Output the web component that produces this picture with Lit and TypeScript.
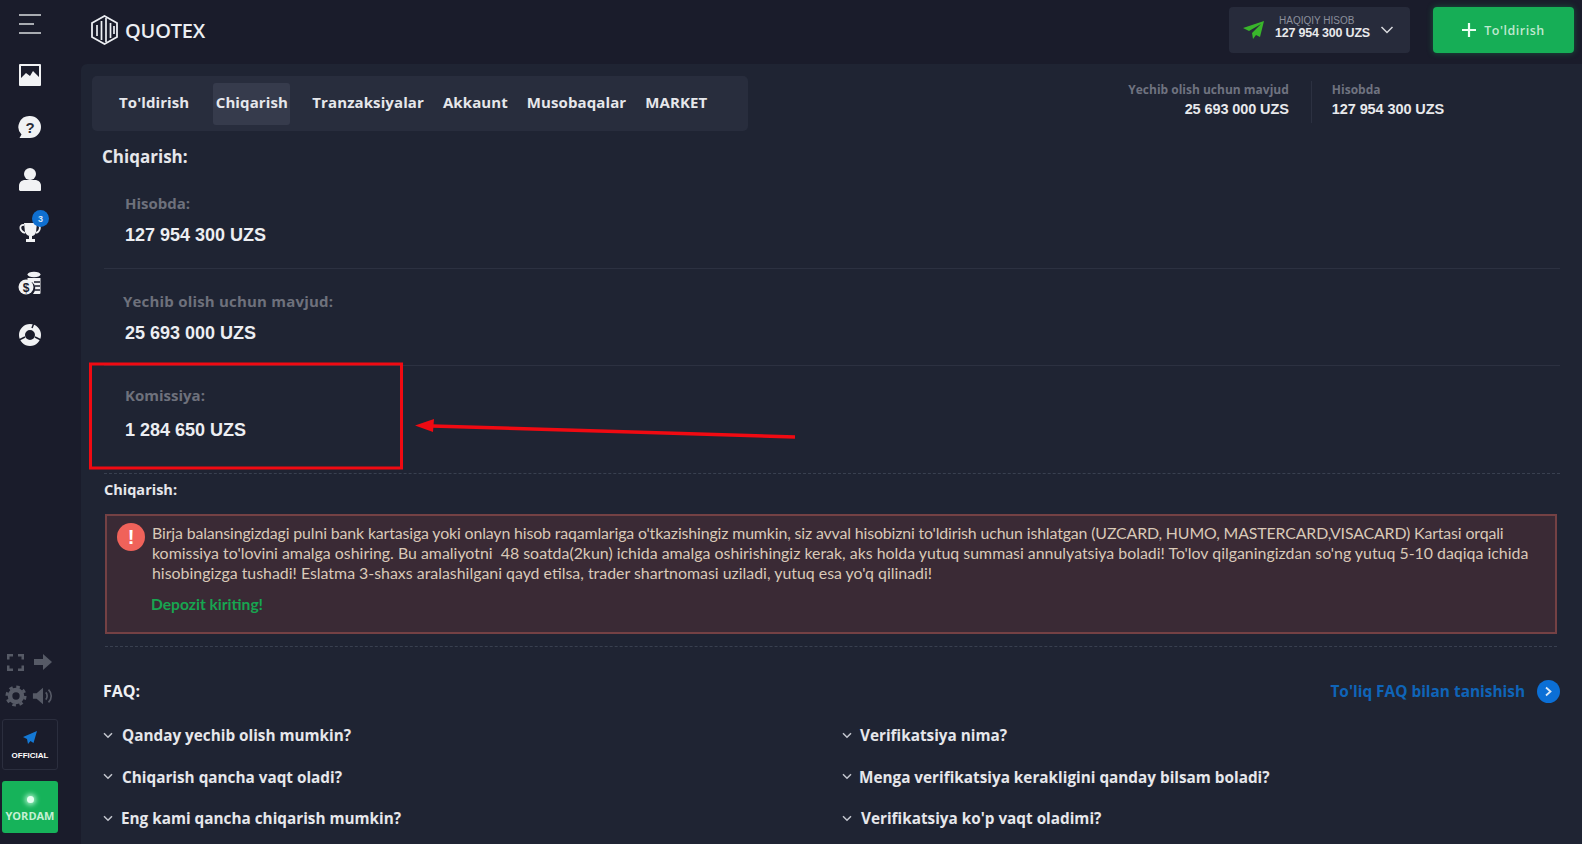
import { LitElement, html, css, svg } from "lit";
import { customElement } from "lit/decorators.js";

const chevron = html`<svg class="chev" viewBox="0 0 10 7"><path d="M1 1.2 5 5.2 9 1.2" fill="none" stroke="#c4c7cf" stroke-width="1.5"/></svg>`;

@customElement("app-root")
export class AppRoot extends LitElement {
  static styles = css`
    :host { display: block; width: 1582px; height: 844px; overflow: hidden; position: relative; background: #1a1c2b; color: #fff; font-family: "Open Sans", "Noto Sans", sans-serif; }
    * { box-sizing: border-box; }
    .app { display: grid; grid-template-columns: 81px 1fr; height: 844px; }
    .side { display: flex; flex-direction: column; align-items: flex-start; padding: 12px 0 11px 2px; }
    .burger { width: 56px; height: 24px; display: flex; justify-content: center; margin-bottom: 13px; }
    .ic { width: 56px; height: 52px; display: flex; align-items: center; justify-content: center; position: relative; }
    .ic svg { width: 24px; height: 24px; }
    .badge { position: absolute; left: 30px; top: 5px; width: 17px; height: 17px; border-radius: 50%; background: #0f6fd0; color: #d9e7f7; font: 700 9px "Liberation Sans", sans-serif; display: flex; align-items: center; justify-content: center; }
    .tools { margin-top: auto; display: grid; grid-template-columns: 27px 27px; gap: 12px 0; width: 54px; justify-items: center; align-items: center; margin-bottom: 12px; }
    .tools svg { width: 22px; height: 22px; }
    .tools svg.fs { width: 19px; height: 19px; }
    .official { width: 56px; height: 51px; border: 1px solid #2b2e3e; border-radius: 3px; display: flex; flex-direction: column; align-items: center; justify-content: center; gap: 5px; font: 700 8px "Liberation Sans", sans-serif; margin-bottom: 11px; }
    .official svg { width: 16px; height: 16px; }
    .help { width: 56px; height: 52px; background: #16b35a; border-radius: 3px; display: flex; flex-direction: column; align-items: center; justify-content: center; gap: 5px; font: 700 11px "Open Sans", sans-serif; color: #c4f0d4; padding-top: 4px; }
    .dot { width: 7px; height: 7px; border-radius: 50%; background: #e4fff0; box-shadow: 0 0 5px 2px #a8f0c8; }

    .right { display: flex; flex-direction: column; min-width: 0; }
    .top { height: 64px; display: flex; align-items: center; padding: 0 8px 4px 10px; }
    .logo { display: flex; align-items: center; gap: 7px; font: 600 20px "Open Sans", sans-serif; color: #eceef2; letter-spacing: -0.2px; }
    .logo svg { width: 27px; height: 30px; }
    .acct { margin-left: auto; width: 181px; height: 46px; background: #272b3b; border-radius: 4px; display: flex; align-items: center; padding-left: 14px; margin-right: 23px; }
    .acct .plane { width: 21px; height: 18px; margin-right: 11px; }
    .acct .txt { margin-top: -4px; }
    .acct .lbl { font: 400 10px "Liberation Sans", sans-serif; color: #8b8f9c; padding-left: 4px; line-height: 11px; }
    .acct .val { font: 700 12.5px "Liberation Sans", sans-serif; color: #e8e9ec; line-height: 15px; letter-spacing: -0.2px; }
    .acct .chev { width: 14px; height: 10px; margin-left: 10px; }
    .dep { width: 141px; height: 46px; background: #16ae56; border-radius: 4px; display: flex; align-items: center; justify-content: center; gap: 8px; font: 600 12.5px "Open Sans", sans-serif; letter-spacing: 0.5px; color: #bfe8cf; box-shadow: 0 0 6px rgba(22,174,86,.4); }
    .dep svg { width: 14px; height: 14px; }

    .main { flex: 1; background: #1f2433; padding: 12px 22px 0 11px; border-top-left-radius: 6px; min-height: 0; }
    .headrow { display: flex; align-items: flex-start; }
    .tabs { width: 656px; height: 55px; background: #282d3d; border-radius: 5px; display: flex; align-items: center; gap: 19px; padding-left: 27px; font: 700 15px "Open Sans", sans-serif; letter-spacing: 0.1px; color: #e6e7eb; }
    .tab { height: 42px; display: flex; align-items: center; border-radius: 3px; white-space: nowrap; padding-bottom: 3px; }
    .tab.on { background: #363b4c; margin: 0 3px 0 5px; width: 77px; justify-content: center; }
    .stats { margin-left: auto; margin-right: 116px; display: flex; margin-top: 5px; }
    .stat { font: 700 12px "Open Sans", sans-serif; color: #6f7380; line-height: 18px; }
    .stat b { display: block; font: 700 14.5px "Liberation Sans", sans-serif; color: #e8e9ec; line-height: 20px; letter-spacing: -0.1px; }
    .stat.a { text-align: right; padding-right: 22px; border-right: 1px solid #2c3141; height: 42px; }
    .stat.b { padding-left: 20px; }

    h2 { margin: 15px 0 0 10px; font: 700 17px/22px "Open Sans", sans-serif; color: #e6e7eb; }
    .block { margin-left: 12px; padding-left: 21px; height: 97px; border-bottom: 1px solid #2c3141; padding-top: 22px; }
    .block.first { height: 101px; padding-top: 25px; }
    .block.plain { height: 108px; border-bottom: 1px dashed #394050; padding-top: 19px; }
    .lbl2 { font: 700 15px/20px "Open Sans", sans-serif; color: #6e717c; }
    .lbl2.wide { letter-spacing: 0.2px; margin-left: -2px; }
    .val2 { font: 700 18px/22px "Liberation Sans", sans-serif; color: #eceef2; margin-top: 11px; }
    .plain .val2 { margin-top: 14px; }
    h3 { margin: 5px 0 0 12px; font: 700 14.5px/22px "Open Sans", sans-serif; color: #e6e7eb; }
    .alert { margin: 13px 0 0 13px; width: 1452px; height: 120px; background: #3a2a35; border: 2px solid #744144; display: flex; padding: 7px 10px; gap: 7px; }
    .alert .mark { width: 28px; height: 28px; border-radius: 50%; background: #f0625a; color: #fff; font: 700 20px "Liberation Sans", sans-serif; display: flex; align-items: center; justify-content: center; flex: none; }
    .alert p { margin: 0; font: 400 15.9px/20px "Lato", sans-serif; color: #d9c9b8; white-space: nowrap; }
    .alert .l1 { letter-spacing: -0.14px; }
    .alert .go { display: block; font: 700 15.6px/20px "Lato", sans-serif; color: #17a550; margin-top: 11px; margin-left: -1px; }
    .dash { margin: 12px 0 0 13px; width: 1452px; border-top: 1px dashed #394050; }
    .faqhead { display: flex; align-items: center; justify-content: space-between; margin: 32px 0 0 11px; width: 1457px; height: 24px; }
    .faqhead h4 { margin: 0; font: 700 16px/22px "Open Sans", sans-serif; color: #eef0f3; }
    .more { display: flex; align-items: center; gap: 12px; font: 700 15.4px "Open Sans", sans-serif; color: #0f64b8; }
    .more i { width: 23px; height: 23px; border-radius: 50%; background: #0b6fd6; display: flex; align-items: center; justify-content: center; }
    .more svg { width: 9px; height: 11px; }
    .faq { display: grid; grid-template-columns: 739px 1fr; margin: 21px 0 0 11px; row-gap: 19.5px; }
    .q { display: flex; align-items: center; gap: 9px; font: 700 15.3px/22px "Open Sans", sans-serif; color: #e6e7eb; white-space: nowrap; }
    .q.tight { gap: 8px; }
    .q.tighter { gap: 7px; }
    .chev { width: 10px; height: 7px; flex: none; }

    .overlay { position: absolute; left: 0; top: 0; width: 1582px; height: 844px; pointer-events: none; }
  `;

  render() {
    const W = "#f1f2f4";
    return html`
      <div class="app">
        <aside class="side">
          <div class="burger"><svg width="24" height="24" viewBox="0 0 24 24"><path d="M1 3h22M1 12h15M1 21h22" stroke="#d8dade" stroke-width="1.6"/></svg></div>
          <div class="ic"><svg viewBox="0 0 24 24"><path fill-rule="evenodd" fill="${W}" d="M2 1h20a1 1 0 0 1 1 1v20a1 1 0 0 1-1 1H2a1 1 0 0 1-1-1V2a1 1 0 0 1 1-1Zm1 14 5-5 4 3 3-5 6 6V3H3Z"/></svg></div>
          <div class="ic"><svg viewBox="0 0 24 24"><path fill="${W}" d="M12 1a11 11 0 0 1 0 22H1.500l2-3.400A11 11 0 0 1 12 1Z"/><text x="12" y="17.500" text-anchor="middle" font-family="Liberation Sans" font-weight="700" font-size="15" fill="#2a2c38">?</text></svg></div>
          <div class="ic"><svg viewBox="0 0 24 24"><circle cx="12" cy="7" r="6" fill="${W}"/><path fill="${W}" d="M1 23v-4c0-4 3-6 6-6h10c3 0 6 2 6 6v4a1 1 0 0 1-1 1H2Z"/></svg></div>
          <div class="ic"><svg viewBox="0 0 24 24"><path fill="${W}" d="M6 4h13l-1 9c-.5 2.500-2.500 4-4 4h-2c-2 0-4-1.500-5-4Z"/><path d="M6 6C1 5 1 12 7 14M19 6c4-1 4 6-1 8" fill="none" stroke="${W}" stroke-width="1.800"/><path fill="${W}" d="M11 17h3v3h3v3H8v-3h3Z"/></svg><span class="badge">3</span></div>
          <div class="ic"><svg viewBox="0 0 24 24"><ellipse cx="16" cy="3.500" rx="6.500" ry="2.800" fill="${W}"/><path fill="${W}" d="M9.500 7h13v15a1 1 0 0 1-1 1H15a8 8 0 0 0-1-12H9.500Z"/><path d="M16 11h6M17 15h5M17 19h5" stroke="#1a1c2b" stroke-width="1.300"/><circle cx="8" cy="16" r="7.500" fill="${W}"/><text x="8" y="20.500" text-anchor="middle" font-family="Liberation Sans" font-weight="700" font-size="12" fill="#1a1c2b">$</text></svg></div>
          <div class="ic"><svg viewBox="0 0 24 24"><circle cx="12" cy="12" r="8" fill="none" stroke="${W}" stroke-width="6"/><path d="M14 5 16 0M7 14 1 17M17 14 23 17" stroke="#1a1c2b" stroke-width="1.500"/></svg></div>

          <div class="tools">
            <svg class="fs" viewBox="0 0 19 19" fill="#565a66"><path d="M1 1h6v2.500H3.500V6.500H1ZM12 1h6v5.500h-2.500v-3H12ZM1 12.500h2.500v3H7V18H1ZM15.500 12.500H18V18h-6v-2.500h3.500Z"/></svg>
            <svg viewBox="0 0 22 22" fill="#565a66"><path d="M2 8h9V3l9 8-9 8v-5H2Z"/></svg>
            <svg viewBox="0 0 24 24"><circle cx="12" cy="12" r="6.500" fill="none" stroke="#565a66" stroke-width="5"/><circle cx="12" cy="12" r="10" fill="none" stroke="#565a66" stroke-width="3" stroke-dasharray="3.900 3.954"/></svg>
            <svg viewBox="0 0 24 22"><path fill="#565a66" d="M1 8h4l7-6v18l-7-6H1Z"/><path d="M15 7c2 2 2 6 0 8M18 4c4 4 4 10 0 14" fill="none" stroke="#565a66" stroke-width="1.800"/></svg>
          </div>
          <div class="official"><svg viewBox="0 0 16 16"><path fill="#1478d4" d="M15 1 1 7l4 2 1 5 2.500-3 3 2Z"/></svg>OFFICIAL</div>
          <div class="help"><span class="dot"></span>YORDAM</div>
        </aside>

        <div class="right">
          <header class="top">
            <div class="logo">
              <svg viewBox="0 0 27 30"><path d="M13.500 1 26 8v14l-12.500 7L1 22V8Z" fill="none" stroke="#eceef2" stroke-width="1.800"/><path d="M6 10v11M10.500 6v19M15 3v24M19.500 8v15M23 11v8" stroke="#eceef2" stroke-width="1.700" fill="none"/></svg>
              QUOTEX
            </div>
            <div class="acct">
              <svg class="plane" viewBox="0 0 21 18"><path fill="#39b52b" d="M21 0 0 7l6 3 12-7-9 9 1 6 3-4 4 2Z"/></svg>
              <div class="txt"><div class="lbl">HAQIQIY HISOB</div><div class="val">127 954 300 UZS</div></div>
              <svg class="chev" viewBox="0 0 14 10"><path d="M1.500 2 7 7.500 12.500 2" fill="none" stroke="#d8dade" stroke-width="1.500"/></svg>
            </div>
            <div class="dep"><svg viewBox="0 0 14 14"><path d="M7 0v14M0 7h14" stroke="#eafff2" stroke-width="2.200"/></svg>To'ldirish</div>
          </header>

          <main class="main">
            <div class="headrow">
              <nav class="tabs">
                <span class="tab">To'ldirish</span>
                <span class="tab on">Chiqarish</span>
                <span class="tab">Tranzaksiyalar</span>
                <span class="tab">Akkaunt</span>
                <span class="tab">Musobaqalar</span>
                <span class="tab">MARKET</span>
              </nav>
              <div class="stats">
                <div class="stat a">Yechib olish uchun mavjud<b>25 693 000 UZS</b></div>
                <div class="stat b">Hisobda<b>127 954 300 UZS</b></div>
              </div>
            </div>

            <h2>Chiqarish:</h2>
            <section class="block first"><div class="lbl2">Hisobda:</div><div class="val2">127 954 300 UZS</div></section>
            <section class="block"><div class="lbl2 wide">Yechib olish uchun mavjud:</div><div class="val2">25 693 000 UZS</div></section>
            <section class="block plain"><div class="lbl2">Komissiya:</div><div class="val2">1 284 650 UZS</div></section>

            <h3>Chiqarish:</h3>
            <div class="alert">
              <span class="mark">!</span>
              <p><span class="l1">Birja balansingizdagi pulni bank kartasiga yoki onlayn hisob raqamlariga o'tkazishingiz mumkin, siz avval hisobizni to'ldirish uchun ishlatgan (UZCARD, HUMO, MASTERCARD,VISACARD) Kartasi orqali</span><br>komissiya to'lovini amalga oshiring. Bu amaliyotni&nbsp; 48 soatda(2kun) ichida amalga oshirishingiz kerak, aks holda yutuq summasi annulyatsiya boladi! To'lov qilganingizdan so'ng yutuq 5-10 daqiqa ichida<br>hisobingizga tushadi! Eslatma 3-shaxs aralashilgani qayd etilsa, trader shartnomasi uziladi, yutuq esa yo'q qilinadi!<span class="go">Depozit kiriting!</span></p>
            </div>
            <div class="dash"></div>

            <div class="faqhead">
              <h4>FAQ:</h4>
              <div class="more">To'liq FAQ bilan tanishish <i><svg viewBox="0 0 9 11"><path d="M2 1.500 6.500 5.500 2 9.500" fill="none" stroke="#dbe9f8" stroke-width="1.800"/></svg></i></div>
            </div>
            <div class="faq">
              <div class="q">${chevron}Qanday yechib olish mumkin?</div>
              <div class="q tight">${chevron}Verifikatsiya nima?</div>
              <div class="q">${chevron}Chiqarish qancha vaqt oladi?</div>
              <div class="q tighter">${chevron}Menga verifikatsiya kerakligini qanday bilsam boladi?</div>
              <div class="q tight">${chevron}Eng kami qancha chiqarish mumkin?</div>
              <div class="q">${chevron}Verifikatsiya ko'p vaqt oladimi?</div>
            </div>
          </main>
        </div>
      </div>
      <svg class="overlay" viewBox="0 0 1582 844">
        ${svg`<rect x="90.500" y="364" width="311" height="104" fill="none" stroke="#f00a12" stroke-width="3"/>
        <path d="M795 437 432 426" stroke="#f00a12" stroke-width="3.500" fill="none"/>
        <path d="M415 425.500 434 419 433 432Z" fill="#f00a12"/>`}
      </svg>
    `;
  }
}
